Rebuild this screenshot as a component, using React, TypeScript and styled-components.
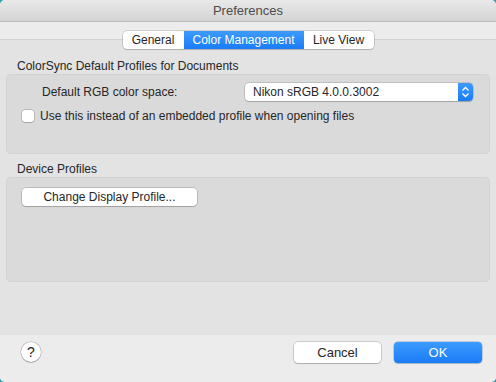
import React from "react";
import styled, { createGlobalStyle } from "styled-components";

const GlobalStyle = createGlobalStyle`
  html, body {
    margin: 0;
    padding: 0;
    background: #2a9fa9;
  }
  body {
    font-family: "Liberation Sans", Arial, sans-serif;
    font-size: 12px;
    color: #262626;
  }
`;

const Window = styled.div`
  width: 496px;
  height: 382px;
  display: flex;
  flex-direction: column;
  border-radius: 5px;
  overflow: hidden;
  background: #e3e3e3;
`;

const TitleBar = styled.div`
  height: 21px;
  display: flex;
  align-items: center;
  justify-content: center;
  background: linear-gradient(180deg, #e9e9e9, #d4d4d4);
  border-bottom: 1px solid #b9b9b9;
  color: #4d4d4d;
  font-size: 13px;
`;

const TabStrip = styled.div`
  height: 30px;
  display: flex;
  justify-content: center;
  padding-top: 9px;
  box-sizing: border-box;
  background: linear-gradient(
    180deg,
    #ececec 0,
    #ececec 17px,
    #d2d2d2 17px,
    #d2d2d2 18px,
    #e3e3e3 18px
  );
`;

const Segmented = styled.div`
  display: flex;
  height: 18px;
  border-radius: 4px;
  background: #fff;
  box-shadow: 0 0 0 0.5px rgba(0, 0, 0, 0.25), 0 1px 1px rgba(0, 0, 0, 0.12);
  overflow: hidden;
`;

const Tab = styled.div<{ $active?: boolean; $w: number }>`
  width: ${(p) => p.$w}px;
  display: flex;
  align-items: center;
  justify-content: center;
  color: ${(p) => (p.$active ? "#fff" : "#262626")};
  background: ${(p) =>
    p.$active ? "linear-gradient(180deg, #3d9bfd, #1a7cf7)" : "transparent"};
`;

const Content = styled.div`
  flex: 1;
  padding: 7px 6px 0;
  display: flex;
  flex-direction: column;
`;

const GroupLabel = styled.div<{ $top?: number }>`
  line-height: 15px;
  margin-top: ${(p) => p.$top ?? 0}px;
  padding-left: 11px;
  color: #262626;
`;

const GroupBox = styled.div<{ $h: number }>`
  height: ${(p) => p.$h}px;
  box-sizing: border-box;
  border: 1px solid #d2d2d2;
  border-radius: 5px;
  background: #dadada;
  padding: 8px 0 0 0;
`;

const SelectRow = styled.div`
  display: flex;
  align-items: center;
  height: 18px;
  padding-left: 35px;
`;

const SelectLabel = styled.div`
  width: 203px;
`;

const Select = styled.div`
  width: 228px;
  height: 18px;
  box-sizing: border-box;
  display: flex;
  align-items: center;
  background: #fff;
  border-radius: 4px;
  box-shadow: 0 0 0 0.5px rgba(0, 0, 0, 0.25), 0 1px 1px rgba(0, 0, 0, 0.15);
  overflow: hidden;
`;

const SelectText = styled.div`
  flex: 1;
  padding-left: 8px;
`;

const Stepper = styled.div`
  width: 15px;
  height: 100%;
  display: flex;
  align-items: center;
  justify-content: center;
  background: linear-gradient(180deg, #3d9bfd, #1a7cf7);
`;

const CheckRow = styled.div`
  display: flex;
  align-items: center;
  gap: 6px;
  margin-top: 9px;
  padding-left: 15px;
  height: 12px;
`;

const Checkbox = styled.div`
  width: 12px;
  height: 12px;
  box-sizing: border-box;
  border-radius: 3px;
  background: #fff;
  box-shadow: 0 0 0 0.5px rgba(0, 0, 0, 0.3), 0 1px 1px rgba(0, 0, 0, 0.1);
`;

const ProfileRow = styled.div`
  padding: 2px 0 0 15px;
`;

const PushButton = styled.div<{ $w: number; $h?: number; $primary?: boolean }>`
  width: ${(p) => p.$w}px;
  height: ${(p) => p.$h ?? 18}px;
  display: flex;
  align-items: center;
  justify-content: center;
  border-radius: 4px;
  font-size: ${(p) => (p.$h ? 13 : 12)}px;
  color: ${(p) => (p.$primary ? "#fff" : "#262626")};
  background: ${(p) =>
    p.$primary ? "linear-gradient(180deg, #3d9bfd, #1a7cf7)" : "#fff"};
  box-shadow: ${(p) =>
    p.$primary
      ? "0 0 0 0.5px rgba(0, 80, 200, 0.4), 0 1px 1px rgba(0, 0, 0, 0.12)"
      : "0 0 0 0.5px rgba(0, 0, 0, 0.28), 0 1px 1px rgba(0, 0, 0, 0.14)"};
`;

const Footer = styled.div`
  height: 47px;
  box-sizing: border-box;
  background: #ececec;
  display: flex;
  align-items: flex-start;
  padding: 7px 14px 0 21px;
  gap: 13px;
`;

const HelpButton = styled.div`
  width: 20px;
  height: 20px;
  border-radius: 50%;
  background: #fff;
  box-shadow: 0 0 0 0.5px rgba(0, 0, 0, 0.28), 0 1px 1px rgba(0, 0, 0, 0.15);
  display: flex;
  align-items: center;
  justify-content: center;
  font-size: 14px;
  color: #262626;
  margin-right: auto;
`;

const Chevrons = () => (
  <svg width="9" height="12" viewBox="0 0 9 12">
    <path
      d="M1.5 4.5 L4.5 1.5 L7.5 4.5 M1.5 7.5 L4.5 10.5 L7.5 7.5"
      fill="none"
      stroke="#fff"
      strokeWidth="1.4"
    />
  </svg>
);

const App = () => {
  return (
    <>
      <GlobalStyle />
      <Window>
        <TitleBar>Preferences</TitleBar>
        <TabStrip>
          <Segmented>
            <Tab $w={61}>General</Tab>
            <Tab $w={120} $active>
              Color Management
            </Tab>
            <Tab $w={70}>Live View</Tab>
          </Segmented>
        </TabStrip>
        <Content>
          <GroupLabel>ColorSync Default Profiles for Documents</GroupLabel>
          <GroupBox $h={80}>
            <SelectRow>
              <SelectLabel>Default RGB color space:</SelectLabel>
              <Select>
                <SelectText>Nikon sRGB 4.0.0.3002</SelectText>
                <Stepper>
                  <Chevrons />
                </Stepper>
              </Select>
            </SelectRow>
            <CheckRow>
              <Checkbox />
              <span>Use this instead of an embedded profile when opening files</span>
            </CheckRow>
          </GroupBox>
          <GroupLabel $top={8}>Device Profiles</GroupLabel>
          <GroupBox $h={105}>
            <ProfileRow>
              <PushButton $w={175}>Change Display Profile...</PushButton>
            </ProfileRow>
          </GroupBox>
        </Content>
        <Footer>
          <HelpButton>?</HelpButton>
          <PushButton $w={87} $h={21}>
            Cancel
          </PushButton>
          <PushButton $w={88} $h={21} $primary>
            OK
          </PushButton>
        </Footer>
      </Window>
    </>
  );
};

export default App;
